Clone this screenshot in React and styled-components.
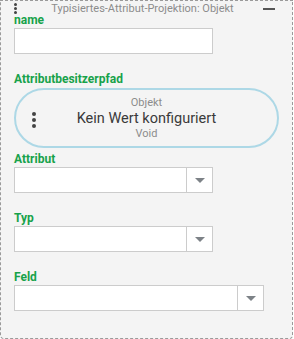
import styled, { createGlobalStyle } from 'styled-components';

const GlobalStyle = createGlobalStyle`
  html, body {
    margin: 0;
    padding: 0;
    background: #ffffff;
  }
  body {
    font-family: Roboto, "Liberation Sans", sans-serif;
  }
`;

function Kebab({ size = 3, gap = 1.5, color = '#444' }) {
  return (
    <KebabWrap $gap={gap}>
      <Dot $size={size} $color={color} />
      <Dot $size={size} $color={color} />
      <Dot $size={size} $color={color} />
    </KebabWrap>
  );
}

function SelectBox({ width }) {
  return (
    <Select $width={width}>
      <SelectValue />
      <SelectButton>
        <Caret />
      </SelectButton>
    </Select>
  );
}

function App() {
  return (
    <>
      <GlobalStyle />
      <Block>
        <Header>
          <HeaderKebab>
            <Kebab size={3} gap={1} />
          </HeaderKebab>
          <Title>Typisiertes-Attribut-Projektion: Objekt</Title>
          <Minimize />
        </Header>

        <Field>
          <Label>name</Label>
          <TextInput />
        </Field>

        <Field>
          <Label>Attributbesitzerpfad</Label>
          <Pill>
            <PillKebab>
              <Kebab size={4} gap={2} />
            </PillKebab>
            <PillType>Objekt</PillType>
            <PillValue>Kein Wert konfiguriert</PillValue>
            <PillType>Void</PillType>
          </Pill>
        </Field>

        <Field $tight>
          <Label>Attribut</Label>
          <SelectBox width={199} />
        </Field>

        <Field>
          <Label>Typ</Label>
          <SelectBox width={199} />
        </Field>

        <Field>
          <Label>Feld</Label>
          <SelectBox width={250} />
        </Field>
      </Block>
    </>
  );
}

const Block = styled.div`
  box-sizing: border-box;
  width: 293px;
  height: 339px;
  padding: 0 13px;
  border: 1px dashed #9a9a9a;
  border-radius: 0 0 4px 4px;
  background-color: #f4f4f4;
`;

const Header = styled.div`
  position: relative;
  box-sizing: border-box;
  display: flex;
  justify-content: center;
  align-items: flex-start;
  height: 12px;
  padding-top: 1px;
`;

const HeaderKebab = styled.div`
  position: absolute;
  left: 0;
  top: 2px;
`;

const Title = styled.span`
  margin-left: -8px;
  font-size: 11px;
  line-height: 13px;
  color: #8c8c8c;
  white-space: nowrap;
`;

const Minimize = styled.span`
  position: absolute;
  right: 4px;
  top: 7px;
  width: 12px;
  height: 2px;
  background-color: #555;
`;

const KebabWrap = styled.div`
  display: flex;
  flex-direction: column;
  gap: ${(props) => props.$gap}px;
`;

const Dot = styled.span`
  display: block;
  width: ${(props) => props.$size}px;
  height: ${(props) => props.$size}px;
  border-radius: 50%;
  background-color: ${(props) => props.$color};
`;

const Field = styled.div`
  display: flex;
  flex-direction: column;
  align-items: flex-start;
  margin-top: ${(props) => (props.$tight ? '4px' : '18px')};

  &:nth-child(2) {
    margin-top: 0;
  }
`;

const Label = styled.label`
  font-size: 12px;
  font-weight: 700;
  line-height: 15px;
  color: #17a24a;
`;

const TextInput = styled.div`
  box-sizing: border-box;
  width: 199px;
  height: 26px;
  border: 1px solid #cccccc;
  background-color: #ffffff;
`;

const Pill = styled.div`
  position: relative;
  box-sizing: border-box;
  display: flex;
  flex-direction: column;
  align-items: center;
  justify-content: center;
  width: 265px;
  height: 60px;
  margin-top: 1px;
  border: 2px solid #add8e6;
  border-radius: 30px;
`;

const PillKebab = styled.div`
  position: absolute;
  left: 16px;
  top: 22px;
`;

const PillType = styled.span`
  font-size: 11px;
  line-height: 14px;
  color: #8c8c8c;
`;

const PillValue = styled.span`
  font-size: 14.5px;
  line-height: 17px;
  color: #3a3a3a;
`;

const Select = styled.div`
  box-sizing: border-box;
  display: flex;
  width: ${(props) => props.$width}px;
  height: 26px;
  border: 1px solid #cccccc;
  background-color: #ffffff;
`;

const SelectValue = styled.div`
  flex: 1;
`;

const SelectButton = styled.div`
  display: flex;
  align-items: center;
  justify-content: center;
  width: 25px;
  border-left: 1px solid #cccccc;
`;

const Caret = styled.span`
  width: 0;
  height: 0;
  margin-top: 1px;
  border-left: 5px solid transparent;
  border-right: 5px solid transparent;
  border-top: 5px solid #7d8287;
`;

export default App;
